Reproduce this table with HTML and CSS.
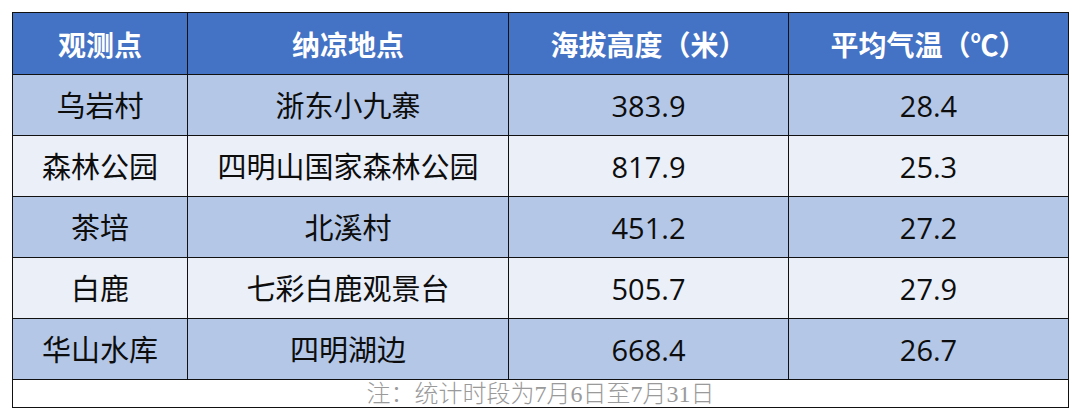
FILE: index.html
```html
<!DOCTYPE html>
<html lang="zh-CN">
<head>
<meta charset="utf-8">
<title>纳凉地点</title>
<link rel="stylesheet" href="styles.css">
</head>
<body>
<table class="data">
  <colgroup>
    <col class="c1"><col class="c2"><col class="c3"><col class="c4">
  </colgroup>
  <thead>
    <tr class="head">
      <th>观测点</th><th>纳凉地点</th><th>海拔高度（米）</th><th>平均气温（℃）</th>
    </tr>
  </thead>
  <tbody>
    <tr class="odd"><td>乌岩村</td><td>浙东小九寨</td><td>383.9</td><td>28.4</td></tr>
    <tr class="even"><td>森林公园</td><td>四明山国家森林公园</td><td>817.9</td><td>25.3</td></tr>
    <tr class="odd"><td>茶培</td><td>北溪村</td><td>451.2</td><td>27.2</td></tr>
    <tr class="even"><td>白鹿</td><td>七彩白鹿观景台</td><td>505.7</td><td>27.9</td></tr>
    <tr class="odd"><td>华山水库</td><td>四明湖边</td><td>668.4</td><td>26.7</td></tr>
    <tr class="note"><td colspan="4">注：统计时段为7月6日至7月31日</td></tr>
  </tbody>
</table>
</body>
</html>
```
FILE: styles.css
```css
html, body {
  margin: 0;
  padding: 0;
  background: #ffffff;
}
body {
  padding: 12px 0 0 12px;
  font-family: "Open Sans", "Noto Sans CJK SC", sans-serif;
}
.data {
  border-collapse: collapse;
  width: 1056px;
  table-layout: fixed;
}
.c1 { width: 175px; }
.c2 { width: 321px; }
.c3 { width: 280px; }
.c4 { width: 280px; }
.data th, .data td {
  border: 1px solid #111111;
  text-align: center;
  vertical-align: middle;
  padding: 0;
  font-size: 29px;
  line-height: 1;
}
.head { height: 62px; }
.head th {
  background: #4472c4;
  color: #ffffff;
  font-family: "Noto Sans CJK SC", sans-serif;
  font-weight: 700;
  font-size: 28px;
}
.odd, .even { height: 61px; }
.odd td { background: #b4c7e7; color: #0d0d0d; }
.even td { background: #eaeff8; color: #0d0d0d; }
.note { height: 28px; }
.note td {
  background: #ffffff;
  color: #9a9a9a;
  font-family: "Liberation Serif", "Noto Sans CJK SC", serif;
  font-weight: 300;
  font-size: 24px;
  line-height: 26px;
}
```
